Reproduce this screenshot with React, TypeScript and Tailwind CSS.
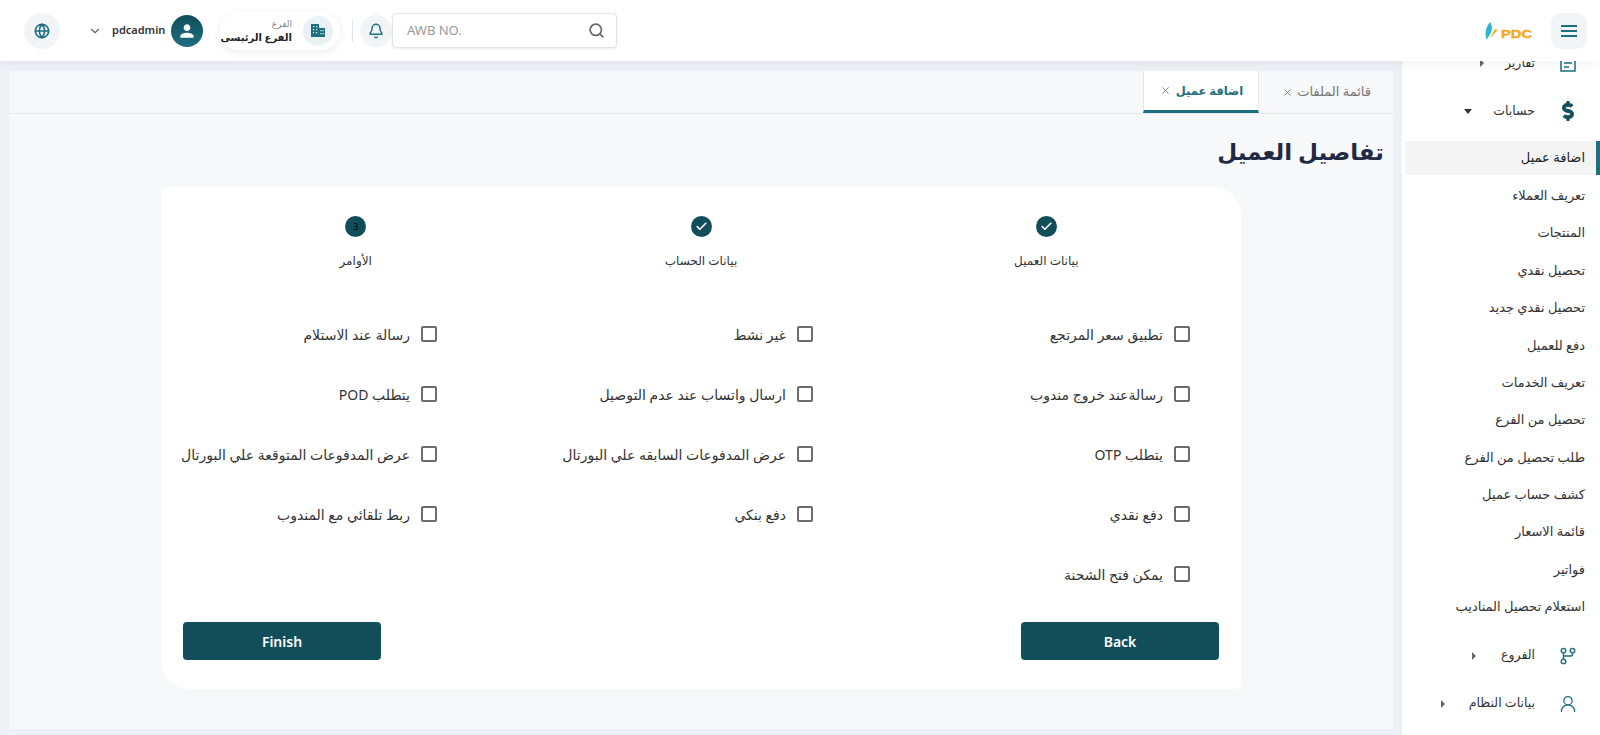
import type { ReactNode } from "react"
import { Search, Bell, ChevronDown, Globe, Check, X, UserRound } from "lucide-react"
import { FaDollarSign } from "react-icons/fa"
import { MdPerson } from "react-icons/md"

const subItems = [
  "تعريف العملاء",
  "المنتجات",
  "تحصيل نقدي",
  "تحصيل نقدي جديد",
  "دفع للعميل",
  "تعريف الخدمات",
  "تحصيل من الفرع",
  "طلب تحصيل من الفرع",
  "كشف حساب عميل",
  "قائمة الاسعار",
  "فواتير",
  "استعلام تحصيل المناديب",
]

const columns = [
  ["تطبيق سعر المرتجع", "رسالةعند خروج مندوب", "يتطلب OTP", "دفع نقدي", "يمكن فتح الشحنة"],
  ["غير نشط", "ارسال واتساب عند عدم التوصيل", "عرض المدفوعات السابقه علي البورتال", "دفع بنكي"],
  ["رسالة عند الاستلام", "يتطلب POD", "عرض المدفوعات المتوقعة علي البورتال", "ربط تلقائي مع المندوب"],
]

function Checkbox({ label }: { label: string }) {
  return (
    <label className="flex h-[60px] items-center gap-[11px] text-[14px] text-[#333]">
      <span className="h-[16px] w-[16px] shrink-0 rounded-[2px] border-2 border-[#6b6b6b] bg-white" />
      <span className="whitespace-nowrap">{label}</span>
    </label>
  )
}

function Step({ label, done, n }: { label: string; done?: boolean; n?: number }) {
  return (
    <div className="flex flex-col items-center gap-[14px]">
      <div className="flex h-[21px] w-[21px] items-center justify-center rounded-full bg-[#124e5a] text-[9px] leading-none text-black">
        {done ? <Check size={13} strokeWidth={3} className="text-white" /> : n}
      </div>
      <span className="text-[12px] leading-[20px] text-[#333]">{label}</span>
    </div>
  )
}

function NavGroup({ label, icon, caret }: { label: string; icon: ReactNode; caret: string }) {
  return (
    <div className="flex h-[48px] items-center pr-[18px] text-[12.5px] text-[#333]">
      <span className="flex w-[28px] justify-center text-[#1d6f80]">{icon}</span>
      <span className="mr-[19px]">{label}</span>
      <span className={caret} />
    </div>
  )
}

export default function App() {
  return (
    <div className="flex h-[735px] w-[1600px] flex-col overflow-hidden bg-[#edf1f5]" style={{ fontFamily: '"Noto Sans", "DejaVu Sans", sans-serif' }}>
      <header className="relative z-10 flex h-[61px] shrink-0 items-center justify-between bg-white pl-[24px] pr-[13px] shadow-[0_2px_12px_rgba(0,0,0,0.06)]">
        <div className="flex items-center">
          <button className="flex h-[36px] w-[36px] items-center justify-center rounded-full bg-[#f1f5f8] text-[#1d6f80]">
            <Globe size={16} strokeWidth={2.4} />
          </button>
          <ChevronDown size={14} className="ml-[28px] text-[#666]" />
          <span className="ml-[10px] w-[52px] whitespace-nowrap text-[11px] font-semibold text-[#333]">pdcadmin</span>
          <span className="ml-[7px] flex h-[32px] w-[32px] items-center justify-center rounded-full bg-gradient-to-b from-[#124e5a] to-[#1d6f80] text-white">
            <MdPerson size={20} />
          </span>
          <div className="ml-[17px] flex h-[38px] w-[120px] items-center justify-end gap-[11px] rounded-full bg-white pr-[7px] shadow-[0_2px_10px_rgba(0,0,0,0.08)]">
            <div dir="rtl" className="flex flex-col items-start">
              <span className="text-[9px] leading-[12px] text-[#888]">الفرع</span>
              <span className="whitespace-nowrap text-[10px] font-bold leading-[14px] text-[#222]">الفرع الرئيسى</span>
            </div>
            <span className="flex h-[30px] w-[30px] shrink-0 items-center justify-center rounded-full bg-[#e9f1f4]">
              <svg width="14" height="13" viewBox="0 0 14 13" fill="none">
                <path d="M0 0H8V13H0Z M8 4H14V13H8Z" fill="#1d6f80" fillRule="evenodd" />
                <path d="M2 2H3.2V3.2H2ZM5 2H6.2V3.2H5ZM2 5H3.2V6.2H2ZM5 5H6.2V6.2H5ZM2 8H3.2V9.2H2ZM5 8H6.2V9.2H5ZM9.5 6H10.7V7.2H9.5ZM11.6 6H12.8V7.2H11.6ZM9.5 9H10.7V10.2H9.5ZM11.6 9H12.8V10.2H11.6Z" fill="#e9f1f4" />
              </svg>
            </span>
          </div>
          <span className="ml-[12px] h-[22px] w-px bg-[#e2e5e8]" />
          <span className="ml-[7px] flex h-[32px] w-[32px] items-center justify-center rounded-full bg-[#f1f5f8] text-[#1d6f80]">
            <Bell size={16} strokeWidth={2.2} />
          </span>
          <div className="flex h-[35px] w-[225px] items-center justify-between rounded-[4px] border border-[#e4e4e4] bg-white pl-[14px] pr-[11px] shadow-[0_1px_3px_rgba(0,0,0,0.08)]">
            <span className="text-[13px] text-[#9a9a9a]">AWB NO.</span>
            <Search size={17} strokeWidth={2.4} className="text-[#666]" />
          </div>
        </div>
        <div className="flex items-center gap-[19px]">
          <svg width="47" height="18" viewBox="0 0 47 18">
            <path d="M5 0 C8 5 8 9 1.5 17.5 C-0.5 12 0.5 6 5 0 Z" fill="#2eb4d0" />
            <path d="M13 7.5 H9.5 L5 16.5 Z" fill="#f5a81c" />
            <text x="16" y="16" fontSize="11.5" fontWeight="900" textLength="31" lengthAdjust="spacingAndGlyphs" stroke="#f5a81c" strokeWidth="0.4" fill="#f5a81c" fontFamily="Liberation Sans">PDC</text>
          </svg>
          <button className="flex h-[36px] w-[36px] items-center justify-center rounded-[10px] bg-[#f1f5f8]">
            <svg width="16" height="12" viewBox="0 0 16 12" fill="none" stroke="#1d6f80" strokeWidth="2">
              <path d="M0 1H16M0 6H16M0 11H16" />
            </svg>
          </button>
        </div>
      </header>

      <div className="flex min-h-0 flex-1">
        <main dir="rtl" className="mb-[6px] ml-[9px] mt-[10px] flex w-[1384px] flex-col bg-[#f7f8fa]">
          <div className="flex h-[43px] shrink-0 border-b border-[#e6e8ea] pr-[22px]">
            <div className="flex items-center gap-[4px] pl-[23px] text-[13px] text-[#777]">
              <span className="whitespace-nowrap">قائمة الملفات</span> <X size={11} className="shrink-0" />
            </div>
            <div className="flex w-[116px] items-center gap-[5px] border-x border-b-[3px] border-x-[#e2e4e6] border-b-[#1d6f80] bg-white pr-[15px] text-[11.5px] font-semibold text-[#1d6f80]">
              <span className="whitespace-nowrap">اضافة عميل</span> <X size={11} className="shrink-0 text-[#777]" />
            </div>
          </div>
          <h1 className="mr-[9px] mt-[20px] text-[23px] font-semibold leading-[34px] text-[#1f2a44]">تفاصيل العميل</h1>
          <section className="mr-[152px] mt-[19px] h-[502px] w-[1080px] rounded-[6px] rounded-bl-[28px] rounded-tr-[28px] bg-white">
            <div className="grid grid-cols-3 px-[22px] pt-[29px]">
              <Step label="بيانات العميل" done />
              <Step label="بيانات الحساب" done />
              <Step label="الأوامر" n={3} />
            </div>
            <div className="mt-[33px] grid h-[300px] grid-cols-[377px_376px_auto] pr-[51px]">
              {columns.map((col, i) => (
                <div key={i} className="flex flex-col">
                  {col.map((l) => (
                    <Checkbox key={l} label={l} />
                  ))}
                </div>
              ))}
            </div>
            <div className="mt-[18px] flex justify-between px-[22px]">
              <button className="h-[38px] w-[198px] rounded-[4px] bg-[#124e5a] text-[14px] font-semibold text-white">Back</button>
              <button className="h-[38px] w-[198px] rounded-[4px] bg-[#124e5a] text-[14px] font-semibold text-white">Finish</button>
            </div>
          </section>
        </main>

        <aside dir="rtl" className="ml-[9px] w-[198px] overflow-hidden bg-white">
          <div className="-mt-[22px]">
            <NavGroup
              label="تقارير"
              icon={
                <svg width="16" height="18" viewBox="0 0 16 18" fill="none" stroke="#1d6f80" strokeWidth="1.5">
                  <path d="M1 2H15V17H1Z M4 9H12 M4 13H9" />
                </svg>
              }
              caret="mr-[21px] h-0 w-0 border-y-[4px] border-l-[4px] border-y-transparent border-l-[#666]"
            />
            <NavGroup
              label="حسابات"
              icon={<FaDollarSign size={20} stroke="currentColor" strokeWidth={20} className="text-[#124e5a]" />}
              caret="mr-[21px] h-0 w-0 border-x-[4.5px] border-t-[5px] border-x-transparent border-t-[#333]"
            />
            <div className="mb-[2px] ml-[3px] mt-[6px] flex h-[34px] items-center border-r-[4px] border-[#1d6f80] bg-[#f4f4f4] pr-[11px] text-[13px] text-[#222]">اضافة عميل</div>
            {subItems.map((s) => (
              <div key={s} className="flex h-[37.4px] items-center pr-[15px] text-[13px] text-[#333]">{s}</div>
            ))}
            <div className="h-[6px]" />
            <NavGroup
              label="الفروع"
              icon={
                <svg width="18" height="18" viewBox="0 0 20 20" fill="none" stroke="#1d6f80" strokeWidth="1.6">
                  <circle cx="5" cy="4" r="2.5" />
                  <circle cx="15" cy="4" r="2.5" />
                  <circle cx="5" cy="16" r="2.5" />
                  <path d="M5 6.5V13.5 M15 6.5V8a2 2 0 0 1-2 2H5" />
                </svg>
              }
              caret="mr-[25px] h-0 w-0 border-y-[4px] border-l-[4px] border-y-transparent border-l-[#666]"
            />
            <NavGroup
              label="بيانات النظام"
              icon={<UserRound size={20} strokeWidth={1.5} />}
              caret="mr-[24px] h-0 w-0 border-y-[4px] border-l-[4px] border-y-transparent border-l-[#666]"
            />
          </div>
        </aside>
      </div>
    </div>
  )
}
